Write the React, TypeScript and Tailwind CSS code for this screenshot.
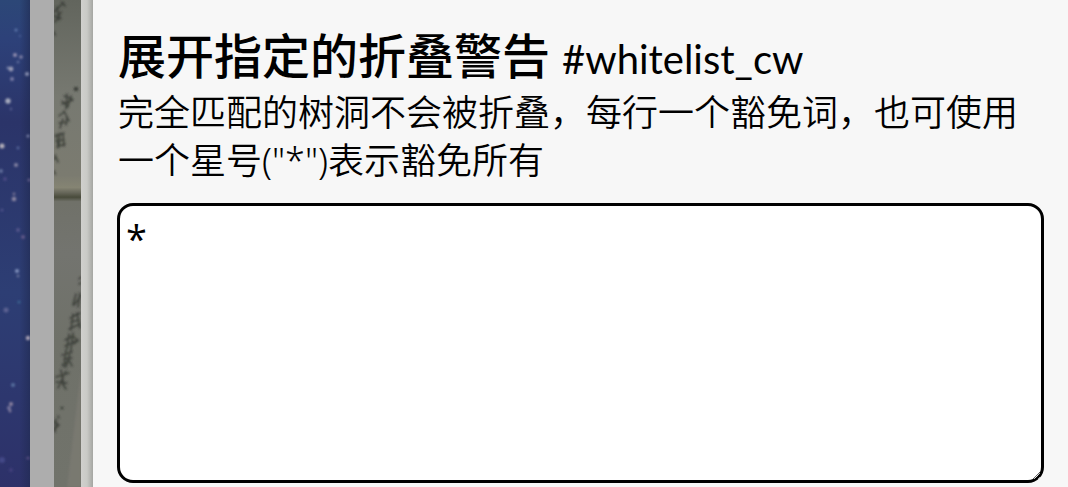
import { useState } from 'react';

const stars: [number, number, number, string][] = [
  [16, 30, 1.5, '#6078ad'], [20, 36, 1, '#51699f'], [15, 55, 2, '#938fb0'], [21, 57, 1.8, '#8585a8'],
  [18, 62, 1.3, '#67719f'], [11, 69, 2.4, '#999bb5'], [8, 68, 1.4, '#7883aa'], [27, 74, 2, '#8a91b2'],
  [12, 79, 1.9, '#7d7fa8'], [8, 101, 2.7, '#a6aabd'], [11, 109, 1.2, '#5c6293'], [28, 136, 1.5, '#7c83aa'],
  [2, 146, 2.5, '#b3afb9'], [18, 148, 1.4, '#59699c'], [16, 165, 2, '#8583a3'], [1, 171, 1.9, '#65729e'],
  [5, 179, 1.7, '#514e88'], [29, 180, 1.5, '#66608f'], [14, 199, 2.3, '#8b86a2'], [14, 194, 1.4, '#777395'],
  [2, 210, 1.5, '#4d518b'], [18, 230, 1.9, '#57578c'], [23, 237, 1.9, '#655a8a'], [17, 271, 2, '#8293bd'],
  [18, 276, 1.2, '#7781a6'], [6, 310, 2.5, '#5b6292'], [19, 302, 1.5, '#3d6590'], [28, 338, 2.2, '#aaa3b6'],
  [13, 385, 2, '#56719f'], [11, 404, 2, '#8d83a0'], [9, 408, 2, '#77759c'], [10, 411, 1.4, '#8880a0'],
  [28, 458, 1.6, '#574e83'], [2, 460, 3, '#424887'], [11, 470, 2, '#42417c'],
];

function NightSky() {
  return (
    <svg className="h-full w-full" viewBox="0 0 30 487" preserveAspectRatio="xMidYMin slice" aria-hidden="true">
      <defs>
        <linearGradient id="sky" x2="0" y2="1">
          <stop offset="0" stopColor="#2c4777" />
          <stop offset=".08" stopColor="#2d4179" />
          <stop offset=".25" stopColor="#2b3469" />
          <stop offset=".6" stopColor="#2d3e74" />
          <stop offset="1" stopColor="#2d3169" />
        </linearGradient>
        <linearGradient id="skyEdge">
          <stop offset=".65" stopColor="#202a50" stopOpacity="0" />
          <stop offset="1" stopColor="#202a50" stopOpacity=".6" />
        </linearGradient>
        <filter id="glow"><feGaussianBlur stdDeviation="1" /></filter>
      </defs>
      <rect width="30" height="487" fill="url(#sky)" />
      <rect width="30" height="487" fill="url(#skyEdge)" />
      <g filter="url(#glow)">
        {stars.map(([x, y, r, color]) => <circle key={`${x}-${y}`} cx={x} cy={y} r={r} fill={color} />)}
      </g>
    </svg>
  );
}

function PaperNote() {
  return (
    <svg className="h-full w-full" viewBox="0 0 27 487" preserveAspectRatio="xMidYMin slice" aria-hidden="true">
      <defs>
        <linearGradient id="paper" x2="0" y2="1">
          <stop offset="0" stopColor="#62655d" />
          <stop offset=".2" stopColor="#777971" />
          <stop offset=".36" stopColor="#7b7b70" />
          <stop offset=".385" stopColor="#858473" />
          <stop offset=".395" stopColor="#68685b" />
          <stop offset=".405" stopColor="#494b3b" />
          <stop offset=".414" stopColor="#707169" />
          <stop offset=".52" stopColor="#73746f" />
          <stop offset=".7" stopColor="#6f7169" />
          <stop offset="1" stopColor="#71736b" />
        </linearGradient>
        <filter id="ink" x="-20%" width="140%"><feGaussianBlur stdDeviation=".9" /></filter>
      </defs>
      <rect width="27" height="487" fill="url(#paper)" />
      <path d="M27 370L13 487H27Z" fill="#7d7b73" opacity=".7" filter="url(#ink)" />
      <g filter="url(#ink)" fill="none" stroke="#30342f" strokeWidth="1.6" strokeLinecap="round" opacity=".8">
        <path d="M0 12l8-8M1 22l6-10M0 16l7 2M3 7l2 13M8 2l3 4M0 32l1 3" />
        <circle cx="22" cy="89" r="1.5" fill="#30342f" />
        <path d="M10 96l8 3M8 104l11-4M13 94l-1 15M17 96l-3 10M8 101l6 6" />
        <path d="M5 116l5-4M10 111l5 10M5 123l8-1M9 119l-3 9M13 117l-1 8" />
        <path d="M1 136l9-3M3 134l1 14M9 134l1 12M2 141l8-1M3 147l8-3M6 133l-1 13" />
        <path d="M0 159l2-1M1 155l3 7M0 171l1 3" />
        <path d="M25 279l2-2M25 284l2-1M20 305l7-9M22 294l-3 11M26 293l-2 14" />
        <path d="M16 318l10-5M19 314l-2 16M23 313l3 15M17 322l8-2M15 329l11-5" />
        <path d="M11 340l8-4M15 334l-2 15M19 333l-2 16M11 346l11-5M20 337l4 4M20 344l4-4" />
        <path d="M8 355l10-3M12 350l-2 17M17 350l-5 17M10 359l8-1M15 360l3 6M8 365l6-3" />
        <path d="M2 377l13-4M7 370l3 16M12 371l-8 17M2 382l11 1M8 383l4 6" />
        <circle cx="8" cy="408" r=".7" />
        <path d="M4 416l1 2M0 422l5 3M2 419l-1 13M0 429l4-3" />
      </g>
    </svg>
  );
}

export default function App() {
  const [allowed, setAllowed] = useState('*');

  return (
    <div className="flex min-h-screen items-stretch bg-[#f7f7f7] font-[Lato,'Noto_Sans_CJK_SC',sans-serif] text-black">
      <div className="flex h-screen shrink-0 overflow-hidden">
        <div className="w-[30px]"><NightSky /></div>
        <div className="w-6 bg-[#adadad]" />
        <div className="w-[27px]"><PaperNote /></div>
        <div className="w-3 bg-linear-to-r from-[#d0d0cd] via-[#c9cac6] to-[#a5a6a2]" />
      </div>
      <main className="min-w-0 flex-1 px-6 pt-[26px]">
        <div className="pl-px">
          <div className="flex items-baseline gap-3 leading-[60px]">
            <label htmlFor="whitelist_cw" className="text-[48px] font-medium">展开指定的折叠警告</label>
            <span className="text-[40px]">#whitelist_cw</span>
          </div>
          <p id="whitelist-description" className="font-['Noto_Sans','Noto_Sans_CJK_SC',sans-serif] text-[36px] leading-[48px] font-[350]">
            完全匹配的树洞不会被折叠，每行一个豁免词，也可使用一个星号("*")表示豁免所有
          </p>
        </div>
        <textarea
          id="whitelist_cw"
          aria-describedby="whitelist-description"
          value={allowed}
          onChange={(event) => setAllowed(event.target.value)}
          className="mt-[18px] block h-[280px] w-full resize-y rounded-[16px] border-[3px] border-black bg-white px-[6px] py-1.5 font-['Open_Sans','Noto_Sans_CJK_SC',sans-serif] text-[38px] leading-[52px] outline-none"
        />
      </main>
    </div>
  );
}
